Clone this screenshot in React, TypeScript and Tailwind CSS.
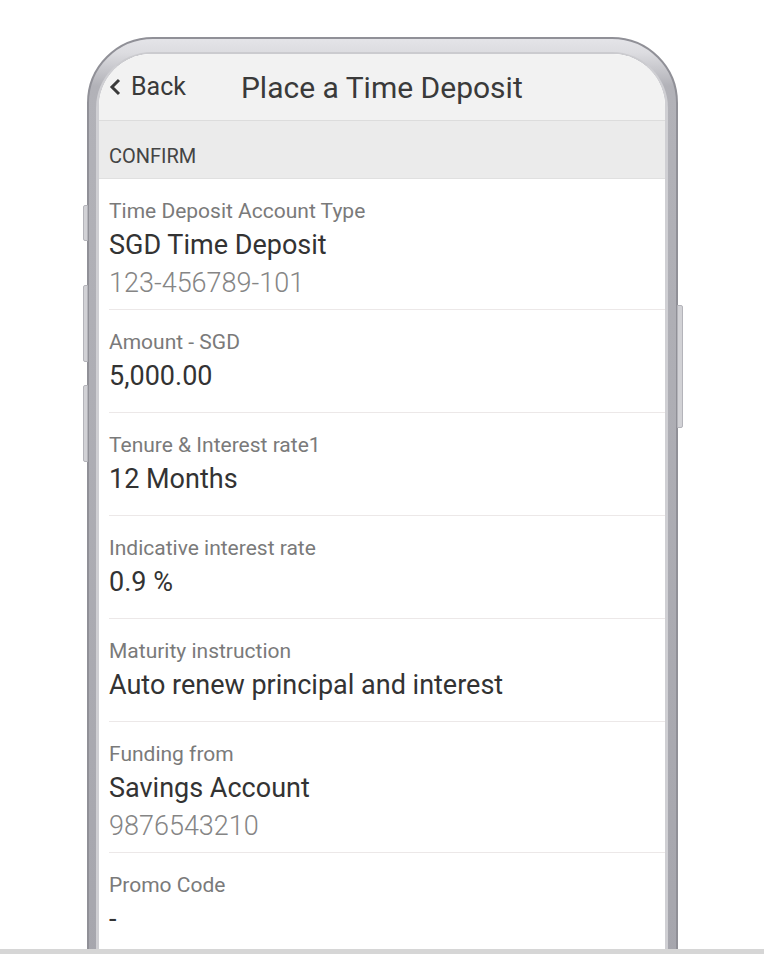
import React from 'react';

const rows = [
  { label: 'Time Deposit Account Type', value: 'SGD Time Deposit', sub: '123-456789-101' },
  { label: 'Amount - SGD', value: '5,000.00' },
  { label: 'Tenure & Interest rate1', value: '12 Months' },
  { label: 'Indicative interest rate', value: '0.9 %' },
  { label: 'Maturity instruction', value: 'Auto renew principal and interest' },
  { label: 'Funding from', value: 'Savings Account', sub: '9876543210' },
  { label: 'Promo Code', value: '-', last: true },
];

function Row({ label, value, sub, last }: { label: string; value: string; sub?: string; last?: boolean }) {
  return (
    <div className={`pt-[20px] ${last ? '' : 'border-b border-[#ece8e8]'} ${sub ? 'pb-[10px]' : 'pb-[20px]'}`}>
      <div className="text-[21px] leading-[24px] text-[#7a7a7a]">{label}</div>
      <div className="mt-[6px] text-[27px] leading-[32px] text-[#333333]">{value}</div>
      {sub && <div className="mt-[6px] text-[27px] font-light leading-[32px] text-[#858585]">{sub}</div>}
    </div>
  );
}

export default function App() {
  return (
    <div className="flex h-[954px] w-[764px] flex-col overflow-hidden bg-white font-['Roboto',sans-serif]">
      <div className="relative min-h-0 flex-1 overflow-hidden pl-[87px] pt-[37px]">
        {/* side buttons */}
        <div className="absolute left-[83px] top-[205px] h-[36px] w-[5px] rounded-l-[2px] border border-[#b4b4ba] bg-[#d2d2d6]" />
        <div className="absolute left-[83px] top-[285px] h-[77px] w-[5px] rounded-l-[2px] border border-[#b4b4ba] bg-[#d2d2d6]" />
        <div className="absolute left-[83px] top-[385px] h-[77px] w-[5px] rounded-l-[2px] border border-[#b4b4ba] bg-[#d2d2d6]" />
        <div className="absolute left-[677px] top-[305px] h-[123px] w-[6px] rounded-r-[2px] border border-[#b4b4ba] bg-[#d2d2d6]" />

        <div className="h-[940px] w-[591px] rounded-t-[66px] border-2 border-[#909097] bg-[linear-gradient(180deg,#e4e4e8_0px,#dcdce0_14px,#b2b2b8_47px,#a6a6ad_100%)] pl-[7px] pr-[8px] pt-[13px]">
          <div className="h-full rounded-t-[56px] border-x-[3px] border-t-[2px] border-x-[#cfcfd3] border-t-[#cbcbcf] bg-white">
            <div className="h-full overflow-hidden rounded-t-[53px] bg-white">
              <div className="flex h-[67px] items-center border-b border-[#dcdcdc] bg-[#f2f2f2] pl-[10px] text-[#3a3a3a]">
                <div className="flex items-center">
                  <svg width="13" height="18" viewBox="0 0 13 18" className="mr-[9px]">
                    <path d="M10 2 L3 9 L10 16" fill="none" stroke="#3a3a3a" strokeWidth="3" />
                  </svg>
                  <span className="text-[25px]">Back</span>
                </div>
                <span className="ml-[55px] text-[30px]">Place a Time Deposit</span>
              </div>
              <div className="h-[58px] border-b border-[#e0e0e0] bg-[#ebebeb] pl-[10px] pt-[24px] text-[20px] leading-[22px] text-[#444444]">
                CONFIRM
              </div>
              <div className="pl-[10px]">
                {rows.map(r => (
                  <Row key={r.label} {...r} />
                ))}
              </div>
            </div>
          </div>
        </div>
      </div>
      <div className="h-[5px] bg-[#d6d6d6]" />
    </div>
  );
}
